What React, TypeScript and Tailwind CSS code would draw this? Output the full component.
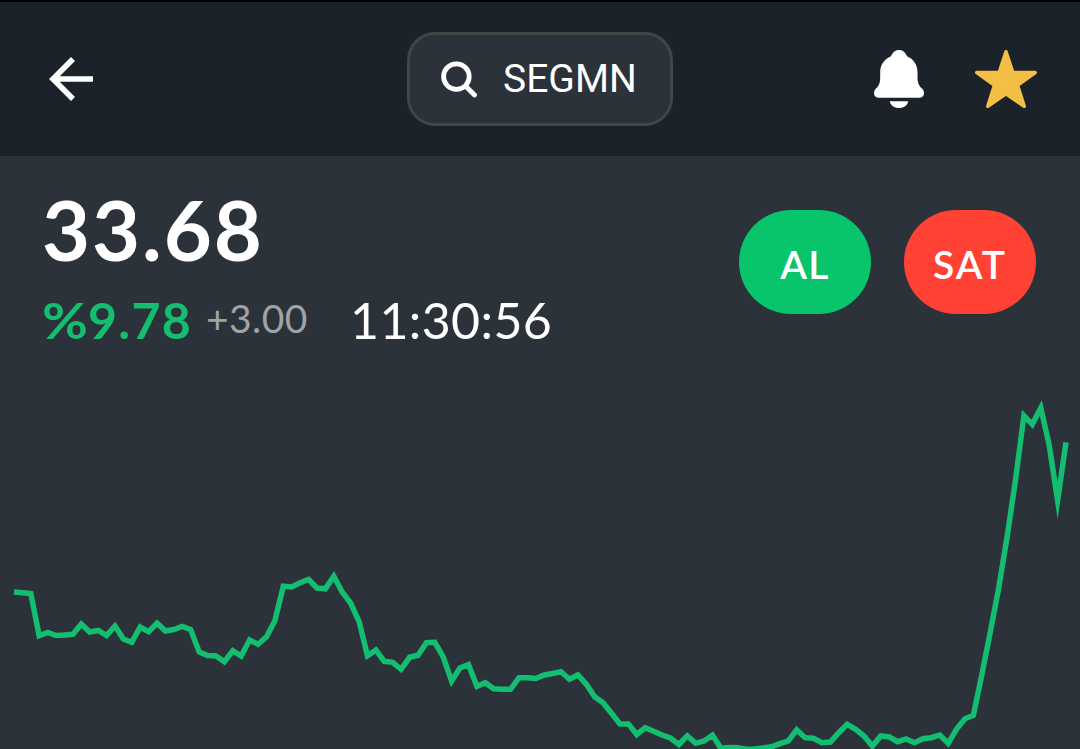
const START_X = 14;
const STEP = 8.416;

const series = [
  592, 592.7, 593.5, 635.8, 632.5, 635.5, 635, 634.3, 624, 632, 630.5, 635.5, 626, 639, 642.3,
  627, 631.7, 623.2, 631, 629.5, 626.5, 629.7, 652, 655.5, 656, 661.7, 650.7, 656, 640, 644.3,
  636.7, 620.7, 586.3, 587, 582.7, 579.5, 588, 588.8, 576.3, 592, 603, 621.7, 655.7, 650, 661.3,
  662.3, 669.3, 657.3, 655.3, 642.7, 642.3, 657, 681, 668, 664.5, 686.3, 682.7, 688.7, 689.3, 689.3,
  677.7, 677.7, 678.5, 675, 673.5, 671.7, 679.3, 675, 684.3, 696.7, 702.7, 713.3, 724, 723.9, 734.5,
  727.7, 731.3, 735, 738, 744.5, 735.9, 743.3, 741, 735.2, 748.2, 747.5, 747.7, 749.3, 749, 748,
  746.8, 743.7, 741, 729.9, 737.7, 738.3, 742.7, 742, 732.7, 724.3, 729.3, 736, 746.1, 736, 737,
  741.7, 739, 742.7, 738.7, 737.7, 735, 743.3, 729, 718.7, 715.3, 675, 632, 588, 537, 480,
  415.7, 424.3, 407.9, 445, 500.5, 442.3,
];

const points = series.map((y, i) => `${(START_X + i * STEP).toFixed(1)},${(y - 374).toFixed(1)}`).join(" ");

function BackIcon() {
  return (
    <svg className="block h-[44px] w-[44px]" viewBox="0 0 44 44" fill="none" stroke="#fff" strokeWidth="5.6">
      <path d="M44 22H5M24 2L4 22L24 42" />
    </svg>
  );
}

function SearchIcon() {
  return (
    <svg className="block h-[37px] w-[37px]" viewBox="0 0 37 37" fill="none" stroke="#fff" strokeWidth="4.8" strokeLinecap="round">
      <circle cx="15.4" cy="15.6" r="12.8" />
      <path d="M25 25.5L33.500 34" />
    </svg>
  );
}

function BellIcon() {
  return (
    <svg className="block h-[58px] w-[50px]" viewBox="0 0 50 58" fill="#fff">
      <path d="M25 0C29 0 31.600 2.500 33 6.300C39.500 9 43.500 15 43.500 22V27C43.500 32.500 44.800 35.500 48 38.600C49.400 40 50 41.500 50 43.200C50 46 48 47.800 45.200 47.800H4.800C2 47.800 0 46 0 43.200C0 41.500 .6 40 2 38.600C5.200 35.500 6.200 32.500 6.200 27V22C6.200 15 10.500 9 17 6.300C18.400 2.500 21 0 25 0Z" />
      <path d="M15.700 51.200H34.300C33.500 55.300 29.700 58 25 58C20.300 58 16.500 55.300 15.700 51.200Z" />
    </svg>
  );
}

function StarIcon() {
  return (
    <svg className="block h-[58px] w-[62px]" viewBox="0 0 62 58" fill="#f4bf45" stroke="#f4bf45" strokeWidth="3.600" strokeLinejoin="round">
      <path d="M31 1.800L37.800 22.500H60.200L42.500 35.400L49.200 56.200L31 43.800L12.800 56.200L19.500 35.400L1.800 22.500H24.200Z" />
    </svg>
  );
}

export default function App() {
  return (
    <div className="flex h-[749px] w-[1080px] flex-col overflow-hidden bg-[#2b3239] font-['Lato',sans-serif] text-white">
      <header className="grid h-[156px] shrink-0 grid-cols-[1fr_266px_1fr] items-center border-t-2 border-black bg-[#1b2229] text-white">
        <button className="ml-[49px] w-[44px]" aria-label="Geri">
          <BackIcon />
        </button>
        <button className="flex h-[94px] items-center rounded-[28px] border-[3px] border-[#444546] bg-[#2b3239] pl-[31px]">
          <SearchIcon />
          <span className="ml-[25px] font-['Roboto',sans-serif] text-[39px] leading-[46px]">SEGMN</span>
        </button>
        <div className="flex items-center justify-end gap-[51px] pr-[43px]">
          <BellIcon />
          <StarIcon />
        </div>
      </header>

      <section className="flex h-[218px] shrink-0 justify-between pl-[42px] pr-[44px]">
        <div className="flex flex-col">
          <div className="mt-[23px] h-[100px] text-[83px] font-bold leading-[100px] tracking-[1.9px]">33.68</div>
          <div className="mt-[9px] flex h-[64px] items-center whitespace-nowrap">
            <span className="flex w-[164px] text-[50px] font-bold leading-[64px] text-[#14be70]">
              <span className="w-[46px] origin-left scale-x-[1.120]">%</span>
              <span className="tracking-[1.3px]">9.78</span>
            </span>
            <span className="w-[144px] pb-[5px] text-[39px] leading-[60px] tracking-[0.4px] text-[#a0a3a6]">+3.00</span>
            <span className="text-[50px] leading-[64px] tracking-[0.4px]">11:30:56</span>
          </div>
        </div>
        <div className="mt-[54px] flex gap-[33px] text-[39px] font-semibold">
          <button className="h-[104px] w-[132px] rounded-[52px] bg-[#08c46b] pt-[4px] tracking-[1.2px]">AL</button>
          <button className="h-[104px] w-[132px] rounded-[52px] bg-[#ff4234] pt-[4px] tracking-[2px]">SAT</button>
        </div>
      </section>

      <svg className="block h-[375px] w-[1080px] shrink-0" viewBox="0 0 1080 375" fill="none">
        <polyline points={points} stroke="#14be70" strokeWidth="5.500" strokeMiterlimit="10" />
      </svg>
    </div>
  );
}
